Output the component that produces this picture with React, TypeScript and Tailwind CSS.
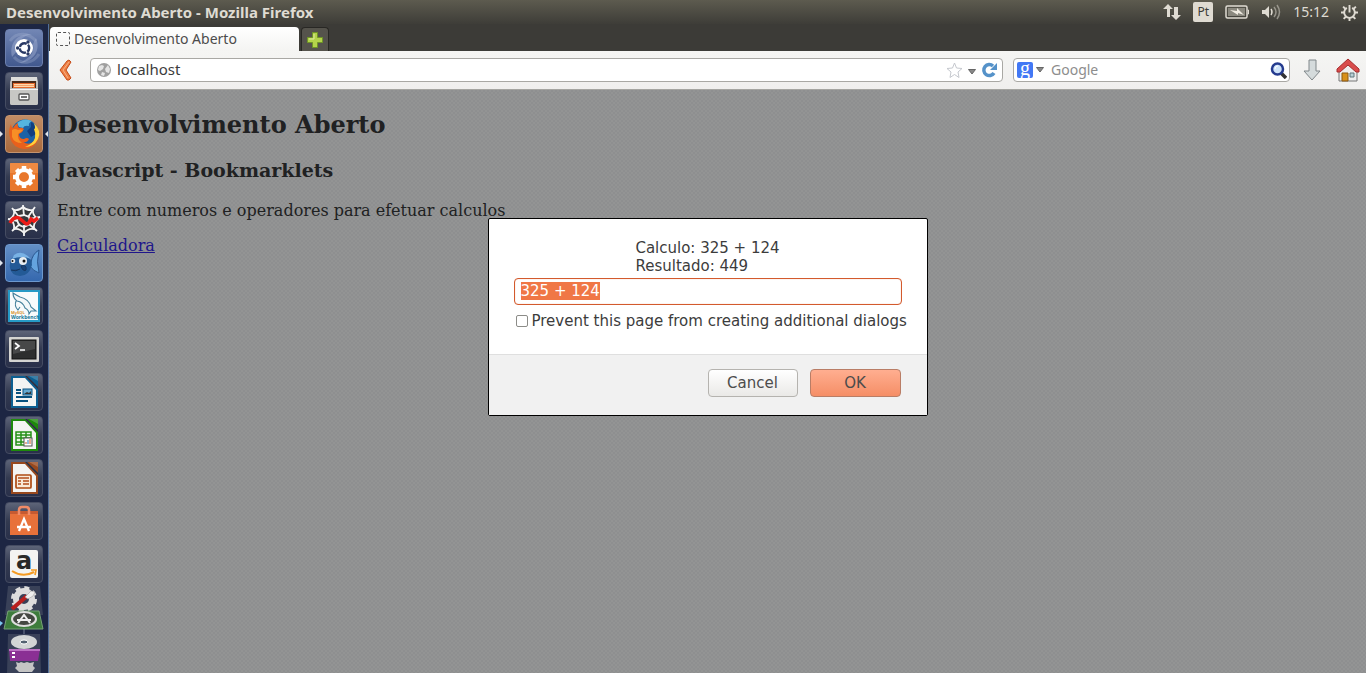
import { useEffect, useRef, type ReactNode } from 'react';

type Launcher = { name: string; tile: string; icon: ReactNode; running?: boolean; active?: boolean };

const plainTile = 'bg-linear-to-b from-[#5d6478] via-[#333a50] to-[#29304a] border-[#454c62]';

function DocIcon({ edge, children }: { edge: string; children: ReactNode }) {
  return (
    <>
      <path d="M6 3h14l13 13v19H6z" fill={edge} />
      <path d="M8 5h12l11 12v16H8z" fill="#f4f4f2" />
      <path d="M22 3h11v11z" fill={edge} />
      <path d="M24 3h9v5z" fill="#fff" opacity=".2" />
      <path d="M20 3l13 13v-2L22 3z" fill="#2c3040" />
      {children}
    </>
  );
}

const launchers: Launcher[] = [
  {
    name: 'Dash',
    tile: 'bg-linear-to-b from-[#7286b4] to-[#42598f] border-[#6d80ae]',
    icon: (
      <>
        <path d="M7 28C4 14 12 4 27 5C17 7 11 13 12 22zM31 9c5 12-2 24-17 25c10-4 16-10 14-19z" fill="#9dacd0" opacity=".5" />
        <path d="M5 12C12 2 24 4 31 12M34 25C28 35 16 36 9 28" stroke="#a9b6d5" strokeWidth="3" fill="none" opacity=".3" />
        <circle cx="19" cy="19" r="9" fill="#fff" />
        <circle cx="19.500" cy="19" r="4.700" fill="none" stroke="#293964" strokeWidth="2.400" strokeDasharray="8.400 1.440" strokeDashoffset="4.200" />
        <circle cx="12.600" cy="19" r="1.700" fill="#293964" />
        <circle cx="23" cy="13" r="1.700" fill="#293964" />
        <circle cx="23" cy="25" r="1.700" fill="#293964" />
      </>
    ),
  },
  {
    name: 'Files',
    tile: plainTile,
    icon: (
      <>
        <path d="M7 5h25l1 5v21q0 2-2 2H7q-2 0-2-2V10z" fill="#bdbdbb" />
        <path d="M6 5h26v4H6z" fill="#dededc" />
        <path d="M7 9h24v7H7z" fill="#4c2b19" />
        <path d="M8 11h22v5H8z" fill="#e66a2d" />
        <path d="M9 12h20v1.500H9zM9 14h20v1H9z" fill="#ffd9ac" />
        <path d="M5 17h28v14q0 2-2 2H7q-2 0-2-2z" fill="#c7c7c4" />
        <path d="M5 17h28v1H5z" fill="#f5f5f5" />
        <rect x="14" y="22" width="10" height="6" rx="1" fill="#fff" stroke="#555" strokeWidth="1.300" />
        <path d="M16 25h6" stroke="#444" strokeWidth="1.500" />
      </>
    ),
  },
  {
    name: 'Firefox',
    tile: 'bg-linear-to-b from-[#c18c65] to-[#a9693c] border-[#c4936e]',
    running: true,
    active: true,
    icon: (
      <>
        <circle cx="20" cy="18" r="13.500" fill="#1b62a6" />
        <path d="M12 8Q19 2 27 6Q23 8 24 11Q19 10 18 13L14 12z" fill="#55b4de" />
        <path d="M26 7Q33 11 31 19L26 22L22 16L26 12z" fill="#123f80" />
        <path d="M6 9Q6 12 8 13Q10 9 13 8Q12 11 14 13Q17 12 19 14Q18 17 14 19Q14 24 19 24Q22 22 24 24Q22 28 18 27Q24 31 29 26Q32 22 31 16Q35 22 32 27Q28 34 19 34Q8 33 5 23Q3 15 6 9z" fill="#e9601c" />
        <path d="M29 8Q37 16 33 24Q29 32 20 32Q28 29 30 23Q31 18 29 14Q31 14 29 8z" fill="#ffd23c" />
        <path d="M7 15Q10 13 13 15Q15 14 18 15Q16 17 13 19Q12 24 17 28Q9 28 7 22z" fill="#f78f26" />
      </>
    ),
  },
  {
    name: 'Settings',
    tile: plainTile,
    icon: (
      <>
        <rect x="5" y="5" width="28" height="28" rx="1" fill="#e8772c" />
        <path d="M5 5h28v10H5z" fill="#f29a55" opacity=".55" />
        <circle cx="19" cy="19" r="7" fill="none" stroke="#fff" strokeWidth="4" />
        <g stroke="#fff" strokeWidth="4.500">
          <path d="M19 8v4M19 26v4M8 19h4M26 19h4M11.500 11.500l2.500 2.500M24 24l2.500 2.500M26.500 11.500L24 14M14 24l-2.500 2.500" />
        </g>
      </>
    ),
  },
  {
    name: 'Debugger',
    tile: plainTile,
    icon: (
      <>
        <path d="M19 6l9 3l5 9l-3 9l-11 6l-10-6l-3-9l4-9z" fill="#35373a" />
        <g fill="none" stroke="#f3f3f3" strokeWidth="1.800">
          <path d="M19 15L18 4M23 16L30 6M25 18L35 16M24 23L32 30M19 24L19 35M15 23L7 30M13 20L3 18M14 16L7 7" />
          <path d="M9 9Q14 10 18 6Q22 10 28 9Q27 14 33 18Q28 22 29 28Q23 27 19 32Q15 27 9 28Q10 22 5 18Q10 15 9 9z" />
          <path d="M14 15L19 14L24 16L25 20L23 24L19 26L14 24L12 19z" />
        </g>
        <path d="M5 22Q9 15 14 17L20 22Q23 25 26 18L29 20L33 17" fill="none" stroke="#ed1c17" strokeWidth="3.500" />
      </>
    ),
  },
  {
    name: 'Bluefish',
    tile: 'bg-linear-to-b from-[#638fc6] to-[#3568ae] border-[#6d98cd]',
    running: true,
    icon: (
      <>
        <path d="M26 19Q27 10 34 6Q31 18 34 29Q28 27 25 22z" fill="#64a3df" stroke="#2b578f" />
        <path d="M7 14Q12 8 18 10Q27 13 27 21Q24 32 15 32Q6 31 5 24Q4 18 7 14z" fill="#235a96" />
        <path d="M9 11Q17 5 26 15Q17 11 7 15z" fill="#79b2e5" />
        <path d="M16 22q6-2 5 4q-3 2-5-4M6 26q5 2 9-1" fill="#19447a" stroke="#17365e" />
        <circle cx="18" cy="17" r="4" fill="#e7edf1" />
        <circle cx="19" cy="17" r="1.500" fill="#111" />
        <circle cx="8" cy="17" r="2.300" fill="#e3e9ef" />
        <circle cx="7.500" cy="17" r="1" fill="#111" />
      </>
    ),
  },
  {
    name: 'MySQL',
    tile: plainTile,
    icon: (
      <>
        <rect x="4" y="4" width="30" height="30" fill="#f7fbfc" stroke="#269ac6" strokeWidth="2" />
        <path d="M8 6Q11 8 15 10Q24 12 26 20L31 24L26 24L24 27Q24 23 20 21Q18 15 12 14Q8 11 8 6zM11 14Q9 19 13 23L15 20" fill="#f2f8fa" stroke="#43809b" strokeWidth="1.100" />
        <text x="6" y="27" className="text-[4px] font-bold" fill="#d8912a">MySQL</text>
        <text x="6" y="32" className="text-[5px] font-bold" fill="#147598">Workbench</text>
      </>
    ),
  },
  {
    name: 'Terminal',
    tile: plainTile,
    icon: (
      <>
        <rect x="4" y="7" width="30" height="25" rx="1" fill="#d5d5d2" />
        <rect x="7" y="10" width="24" height="19" fill="#2d2e2e" stroke="#111" />
        <path d="M8 11h22v8L8 24z" fill="#777" opacity=".35" />
        <path d="M10 13l4 3l-4 3M15 20h5" fill="none" stroke="#fff" strokeWidth="1.700" />
      </>
    ),
  },
  {
    name: 'Writer',
    tile: plainTile,
    icon: (
      <DocIcon edge="#0c5f91">
        <path d="M11 17h5M11 20h5M11 24h16M11 28h12" stroke="#08517e" strokeWidth="2" />
        <rect x="18" y="16" width="9" height="6" fill="#64a9d0" stroke="#08517e" />
        <path d="M19 21l3-2l2 1l2-2v3z" fill="#333" />
      </DocIcon>
    ),
  },
  {
    name: 'Calc',
    tile: plainTile,
    icon: (
      <DocIcon edge="#1e8a0b">
        <path d="M11 16h15v13H11zM11 19h15M11 22h15M11 26h15M16 16v13M21 16v13" fill="#e9f8e4" stroke="#269018" strokeWidth="1.500" />
        <rect x="19" y="22" width="8" height="8" fill="#fff" stroke="#555" />
        <path d="M21 28v-2M25 28v-5" stroke="#d85720" />
        <path d="M23 28v-4" stroke="#2a76b8" />
      </DocIcon>
    ),
  },
  {
    name: 'Impress',
    tile: plainTile,
    icon: (
      <DocIcon edge="#98481d">
        <rect x="11" y="16" width="15" height="13" rx="1" fill="#f9ead9" stroke="#af4b13" strokeWidth="1.700" />
        <path d="M13 19h11M18 22h6M18 25h6M13 22h3M13 25h3" stroke="#b34e1b" strokeWidth="1.500" />
      </DocIcon>
    ),
  },
  {
    name: 'Software Center',
    tile: plainTile,
    icon: (
      <>
        <path d="M5 9h28v24H5z" fill="#e8713a" />
        <path d="M5 9h28v3H5z" fill="#c65a31" />
        <path d="M14 13V8q0-3 3-3h4q3 0 3 3v5" fill="none" stroke="#f08b67" strokeWidth="2.500" />
        <path d="M14 29l5-12l5 12M12 25h14" fill="none" stroke="#fff" strokeWidth="2.300" />
      </>
    ),
  },
  {
    name: 'Amazon',
    tile: plainTile,
    icon: (
      <>
        <rect x="5" y="5" width="28" height="28" rx="2" fill="#f3f3f2" />
        <text x="11" y="24" className="font-['DejaVu_Sans'] text-[24px] font-bold" fill="#292929">a</text>
        <path d="M7 26Q18 33 29 27" fill="none" stroke="#f59b23" strokeWidth="2" />
        <path d="M26 25h5l-1 5" fill="none" stroke="#f59b23" strokeWidth="1.700" />
      </>
    ),
  },
];

function TopPanel() {
  return (
    <header className="flex h-6 items-center justify-between bg-linear-to-b from-[#5d5b4f] to-[#3e3d38] pr-2 pl-1.5 text-[#dfdbd2]">
      <span className="text-[15px] leading-6 font-bold">Desenvolvimento Aberto - Mozilla Firefox</span>
      <div className="flex items-center">
        <svg className="mr-3 size-[18px]" viewBox="0 0 18 18" fill="#dfdbd2">
          <path d="M5 1l5 5H7v8H4V6H0zM11 4h4v8h3l-5 5l-5-5h3z" />
        </svg>
        <span className="mr-3 flex size-5 items-center justify-center rounded-xs bg-[#dfdbd2] text-xs text-[#3c3b37]">Pt</span>
        <svg className="mr-3 h-4 w-6" viewBox="0 0 24 16">
          <rect x="1" y="2" width="21" height="12" rx="1.500" fill="none" stroke="#dfdbd2" strokeWidth="1.500" />
          <path d="M3 4h17v8H3z" fill="#8b897f" />
          <path d="M22.500 6h1v4h-1" stroke="#dfdbd2" fill="none" />
          <path d="M5 6l7 1v-3l7 7l-6-2v2z" fill="#f0ece2" />
        </svg>
        <svg className="mr-3 h-4 w-5" viewBox="0 0 20 16" fill="none" stroke="#dfdbd2" strokeWidth="1.500">
          <path d="M1 6h3l4-4v12l-4-4H1z" fill="#dfdbd2" stroke="none" />
          <path d="M10 5q2 3 0 6" />
          <path d="M13 3q4 5 0 10M16 1q5 7 0 14" opacity=".5" />
        </svg>
        <span className="mr-3 text-sm">15:12</span>
        <svg className="size-[17px]" viewBox="0 0 16 16" fill="none" stroke="#dfdbd2" strokeWidth="1.800">
          <path d="M5.500 3.700a5 5 0 1 0 5 0M8 1v7" />
          <path d="M0 8h3M13 8h3M2 2.500l2 2M14 2.500l-2 2M2.500 14l2-2M13.500 14l-2-2M8 13v3" />
        </svg>
      </div>
    </header>
  );
}

function Dock() {
  return (
    <nav className="flex w-[49px] shrink-0 flex-col gap-[5px] overflow-hidden border-r border-[#526f99] bg-[#1d2643] pt-[5px]">
      {launchers.map((item) => (
        <button key={item.name} aria-label={item.name} className="relative flex h-[38px] w-full shrink-0 justify-center">
          {item.running && <span className="absolute top-4 left-0 border-y-3 border-l-3 border-y-transparent border-l-[#dfe4ec]" />}
          <span className={`size-[38px] rounded-sm border ${item.tile}`}>
            <svg className="-m-px size-[38px]" viewBox="0 0 38 38">{item.icon}</svg>
          </span>
          {item.active && <span className="absolute top-4 right-0 border-y-3 border-r-3 border-y-transparent border-r-[#dfe4ec]" />}
        </button>
      ))}
      <svg className="-mt-1 h-[89px] w-12 shrink-0" viewBox="0 0 48 89">
        <path d="M8 2h32l3 29H5z" fill="#394158" />
        <circle cx="24" cy="15" r="8" fill="none" stroke="#ddd" strokeWidth="6" />
        <circle cx="24" cy="15" r="11.500" fill="none" stroke="#ddd" strokeWidth="3" strokeDasharray="5 4.030" />
        <path d="M12 25L27 12" stroke="#b91f1e" strokeWidth="4" />
        <path d="M25 13l6-6l4 1l-2 4l-5 3z" fill="#eee" stroke="#999" strokeWidth=".5" />
        <path d="M8 27h31l4 18H4z" fill="#3d7c3c" stroke="#77a276" />
        <ellipse cx="24" cy="35" rx="12" ry="7" fill="#444842" stroke="#ddd" strokeWidth="2" />
        <path d="M18 39l6-8l6 8M17 36h14" fill="none" stroke="#eee" strokeWidth="2" />
        <path d="M0 37l3 2l-3 3z" fill="#7cc7ee" />
        <path d="M24 45v6" stroke="#9aa2b5" strokeWidth=".7" />
        <path d="M8 50h32l1 39H7z" fill="#394158" />
        <ellipse cx="24" cy="58" rx="13" ry="7" fill="#d2d5d5" />
        <ellipse cx="24" cy="58" rx="4" ry="2" fill="#536271" stroke="#fff" />
        <path d="M9 65h31l-2 12H10z" fill="#8a2f94" />
        <path d="M9 65h31v2H9z" fill="#bb70c3" />
        <path d="M12 69h3M12 73h3" stroke="#fff" strokeWidth="2" />
        <path d="M16 78l3 1l2-1l3 1l3-1l3 1l4-1l-1 4l2 2l-3 4H19l-4-4l2-2z" fill="#c4c4c4" />
      </svg>
    </nav>
  );
}

function TabBar() {
  return (
    <div className="flex h-[27px] items-end bg-[#3c3b37] pl-px">
      <div className="flex h-6 w-[249px] items-center gap-1 rounded-t-sm bg-linear-to-b from-white to-[#f4f4f2] px-1.5 text-sm text-[#4c4c4c]">
        <span className="size-3.5 rounded-xs border border-dashed border-[#555]" />
        Desenvolvimento Aberto
      </div>
      <button aria-label="New tab" className="ml-0.5 flex h-6 w-7 items-center justify-center rounded-t-sm border border-b-0 border-[#282724] bg-[#55534c]">
        <svg className="size-4" viewBox="0 0 16 16">
          <path d="M5.500.5h5v5h5v5h-5v5h-5v-5h-5v-5h5z" fill="#b4d34b" stroke="#6f9526" />
          <path d="M7 2v5H2" fill="none" stroke="#deed9f" />
        </svg>
      </button>
    </div>
  );
}

function NavBar() {
  return (
    <div className="flex h-[39px] items-center border-b border-[#a5a5a1] bg-linear-to-b from-[#f5f5f3] to-[#f0efee] pr-1.5 pl-2 text-sm">
      <button aria-label="Back" className="mr-4 flex w-[17px] justify-center">
        <svg className="h-[22px] w-4" viewBox="0 0 16 22">
          <path d="M11 1l2 2L8 11l5 8l-2 2H9L2 11L9 2z" fill="#ed7d43" stroke="#c64c18" />
          <path d="M11 3L5 11l5 8" stroke="#f7b184" fill="none" />
        </svg>
      </button>
      <div className="flex h-6 min-w-0 flex-1 items-center rounded-sm border border-[#a9a8a4] bg-white pr-1 pl-1.5">
        <svg className="mr-1.5 size-3.5" viewBox="0 0 14 14">
          <circle cx="7" cy="7" r="7" fill="#a0a0a0" />
          <path d="M2 3l3-1l2 1l-1 3l-3 2L1 7zM8 6l3-4l2 4l-1 4l-3-1zM5 9l3 1l-1 3l-3-1z" fill="#e5e5e5" />
        </svg>
        <input aria-label="Address" defaultValue="localhost" className="min-w-0 flex-1 text-[15px] text-[#3c3c3c] outline-none" />
        <svg className="size-[17px]" viewBox="0 0 17 17">
          <path d="M8.500 1l2 5l5.500.5l-4 3.500l1 5.500l-4.500-3l-4.500 3l1-5.500L1 6.500L6.500 6z" fill="#fff" stroke="#c5c8ce" />
        </svg>
        <svg className="mx-1 mt-1 h-2 w-2.5" viewBox="0 0 10 8"><path d="M1.500 1.500h7L5 6z" fill="#888" stroke="#666" /></svg>
        <svg className="size-[17px]" viewBox="0 0 17 17">
          <path d="M12 4A5.500 5.500 0 1 0 13 11" fill="none" stroke="#5592c9" strokeWidth="3.500" />
          <path d="M16 1v7H9z" fill="#5592c9" />
        </svg>
      </div>
      <div className="ml-2.5 flex h-6 w-[277px] items-center rounded-sm border border-[#a9a8a4] bg-white pr-0.5 pl-[3px]">
        <span className="flex size-4 items-center justify-center rounded-xs bg-[#4278f5] pb-1 font-['Liberation_Serif'] text-xl leading-4 text-white">g</span>
        <svg className="mr-1 ml-0.5 h-2 w-2.5" viewBox="0 0 10 8"><path d="M1.500 1.500h7L5 6z" fill="#888" stroke="#666" /></svg>
        <input aria-label="Search" placeholder="Google" className="ml-0.5 min-w-0 flex-1 text-sm outline-none placeholder:text-[#8d8d8d]" />
        <svg className="size-[17px]" viewBox="0 0 17 17">
          <path d="M11 11l5 5" stroke="#333" strokeWidth="3.500" />
          <circle cx="7.500" cy="7" r="5.500" fill="#cfe4fa" stroke="#253b8f" strokeWidth="2.500" />
          <path d="M5 7q0-3 3-3" stroke="#fff" fill="none" />
        </svg>
      </div>
      <button aria-label="Downloads" className="ml-3">
        <svg className="h-6 w-5" viewBox="0 0 20 24">
          <path d="M7 2h7v11h4l-8 9l-8-9h5z" fill="#d5dbdc" stroke="#80878a" />
        </svg>
      </button>
      <button aria-label="Home" className="ml-3.5">
        <svg className="size-6" viewBox="0 0 24 24">
          <path d="M3 11l9-8l9 8v12H3z" fill="#eee" stroke="#777" />
          <path d="M6 15h6v8H6z" fill="#d8901b" stroke="#8c5812" />
          <path d="M14 15h4v4h-4z" fill="#b9d1d7" stroke="#61767d" />
          <path d="M1 11L12 1l11 10v3h-3l-8-7l-8 7H1z" fill="#d94c4c" stroke="#a62d2d" />
        </svg>
      </button>
    </div>
  );
}

function PromptDialog() {
  const inputRef = useRef<HTMLInputElement>(null);

  useEffect(() => {
    inputRef.current?.focus();
    inputRef.current?.select();
  }, []);

  return (
    <div role="dialog" aria-label="Calculo" className="w-[440px] rounded-xs border border-black bg-white font-['DejaVu_Sans',sans-serif] text-[15px] text-[#3c3c3c]">
      <div className="px-[25px] pt-5 pb-[23px]">
        <p className="mx-auto w-fit leading-[18px]">
          Calculo: 325 + 124
          <br />
          Resultado: 449
        </p>
        <input
          ref={inputRef}
          aria-label="Expressão"
          defaultValue="325 + 124"
          className="mt-[3px] h-[27px] w-full rounded-sm border border-[#d35a2d] px-1.5 pb-px shadow-[inset_0_0_1px_#e9977a] outline-none selection:bg-[#f07746] selection:text-white"
        />
        <label className="mt-1.5 flex h-5 items-center gap-1 whitespace-nowrap">
          <input type="checkbox" className="ml-0.5 size-3 shrink-0 appearance-none rounded-xs border border-[#8c8c88] bg-white" />
          Prevent this page from creating additional dialogs
        </label>
      </div>
      <div className="flex justify-end gap-3 border-t border-[#dfdfdf] bg-[#f1f1f1] px-[26px] pt-3.5 pb-[18px] text-[#4c4c4c]">
        <button className="h-7 w-[90px] rounded-sm border border-[#b5b3af] bg-linear-to-b from-white to-[#eae9e7]">Cancel</button>
        <button className="h-7 w-[91px] rounded-sm border border-[#b97d66] bg-linear-to-b from-[#ffae90] to-[#f58e66]">OK</button>
      </div>
    </div>
  );
}

export default function App() {
  return (
    <div className="flex h-screen flex-col overflow-hidden font-['Noto_Sans',sans-serif]">
      <TopPanel />
      <div className="flex min-h-0 flex-1">
        <Dock />
        <div className="flex min-w-0 flex-1 flex-col">
          <TabBar />
          <NavBar />
          <main className="relative flex-1 bg-[repeating-conic-gradient(#8e8f90_0_25%,#939494_0_50%)] bg-size-[4px_4px] px-2 pt-[21px] font-['DejaVu_Serif',serif] text-[#202122]">
            <h1 className="text-2xl leading-7 font-bold">Desenvolvimento Aberto</h1>
            <h2 className="mt-5 text-[19px] leading-[22px] font-bold">Javascript - Bookmarklets</h2>
            <p className="mt-5 leading-5">Entre com numeros e operadores para efetuar calculos</p>
            <p className="mt-[15px] leading-5">
              <a href="#" className="text-[#20168b] underline">Calculadora</a>
            </p>
            <div className="absolute inset-0 flex items-start justify-center pt-32">
              <PromptDialog />
            </div>
          </main>
        </div>
      </div>
    </div>
  );
}
